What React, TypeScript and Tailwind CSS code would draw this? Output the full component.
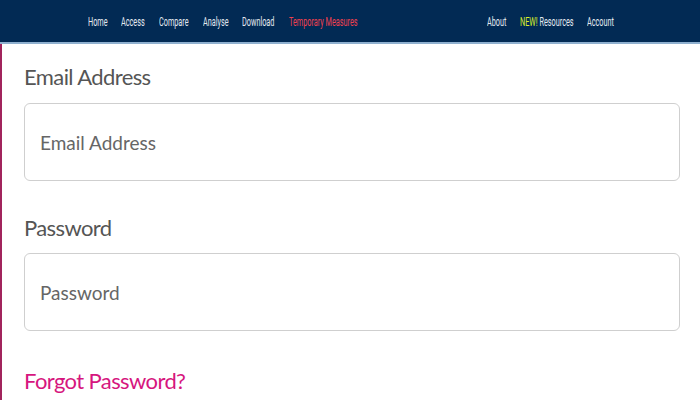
import React from "react";

const NavItem = ({ label, w, className = "" }: { label: React.ReactNode; w: number; className?: string }) => (
  <span className={"inline-block overflow-visible whitespace-nowrap " + className} style={{ width: w }}>
    <span className="inline-block origin-left scale-x-[0.56] whitespace-nowrap">{label}</span>
  </span>
);

export default function App() {
  return (
    <div className="w-[700px] h-[400px] overflow-hidden bg-white" style={{ fontFamily: "Lato, 'Open Sans', sans-serif" }}>
      <nav className="h-[44px] bg-[#022a54] border-b-2 border-[#8fb0cf] flex items-center pt-[2px] text-[13px] text-[#e3e9f0]" style={{ fontFamily: "Roboto, sans-serif" }}>
        <div className="flex items-center ml-[88px] gap-[15px]">
          <NavItem label="Home" w={18} />
          <NavItem label="Access" w={23} />
          <NavItem label="Compare" w={29} />
          <NavItem label="Analyse" w={24} />
          <NavItem label="Download" w={32} />
          <NavItem label="Temporary Measures" w={66} className="text-[#f0404e]" />
        </div>
        <div className="flex items-center ml-[132px] gap-[15px]">
          <NavItem label="About" w={18} />
          <NavItem
            label={
              <>
                <span className="text-[#d8ee2a]">NEW!</span> Resources
              </>
            }
            w={52}
          />
          <NavItem label="Account" w={27} />
        </div>
      </nav>
      <div className="flex h-[356px]">
        <div className="w-[2px] bg-[#a1245c]" />
        <main className="flex-1 pl-[22px] pr-[20px]">
          <div className="mt-[18px] text-[22px] leading-[30px] tracking-[-0.6px] text-[#555]">Email Address</div>
          <div className="mt-[11px] h-[78px] rounded-[6px] border border-[#cfcfcf] flex items-center pl-[15px] pt-[2px] text-[19px] text-[#666]">
            Email Address
          </div>
          <div className="mt-[32px] text-[22px] leading-[30px] tracking-[-0.6px] text-[#555]">Password</div>
          <div className="mt-[10px] h-[78px] rounded-[6px] border border-[#cfcfcf] flex items-center pl-[15px] pt-[3px] text-[19px] text-[#666]">
            Password
          </div>
          <div className="mt-[35px] text-[22px] leading-[30px] tracking-[-0.6px] text-[#d6167e]">Forgot Password?</div>
        </main>
      </div>
    </div>
  );
}
